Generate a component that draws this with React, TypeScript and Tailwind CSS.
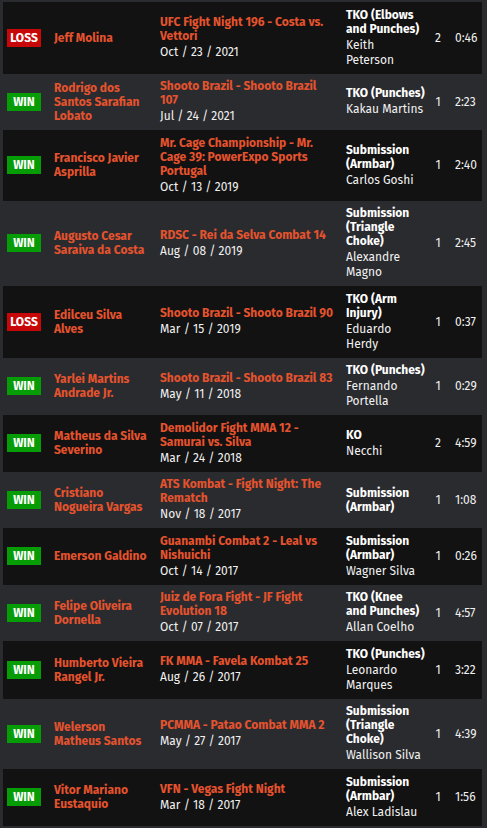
type Fight = {
  result: 'win' | 'loss';
  name: string[];
  event: string[];
  date: string;
  method: string[];
  referee: string[];
  round: number;
  time: string;
};

const fights: Fight[] = [
  { result: 'loss', name: ['Jeff Molina'], event: ['UFC Fight Night 196 - Costa vs.', 'Vettori'], date: 'Oct / 23 / 2021', method: ['TKO (Elbows', 'and Punches)'], referee: ['Keith', 'Peterson'], round: 2, time: '0:46' },
  { result: 'win', name: ['Rodrigo dos', 'Santos Sarafian', 'Lobato'], event: ['Shooto Brazil - Shooto Brazil', '107'], date: 'Jul / 24 / 2021', method: ['TKO (Punches)'], referee: ['Kakau Martins'], round: 1, time: '2:23' },
  { result: 'win', name: ['Francisco Javier', 'Asprilla'], event: ['Mr. Cage Championship - Mr.', 'Cage 39: PowerExpo Sports', 'Portugal'], date: 'Oct / 13 / 2019', method: ['Submission', '(Armbar)'], referee: ['Carlos Goshi'], round: 1, time: '2:40' },
  { result: 'win', name: ['Augusto Cesar', 'Saraiva da Costa'], event: ['RDSC - Rei da Selva Combat 14'], date: 'Aug / 08 / 2019', method: ['Submission', '(Triangle', 'Choke)'], referee: ['Alexandre', 'Magno'], round: 1, time: '2:45' },
  { result: 'loss', name: ['Edilceu Silva', 'Alves'], event: ['Shooto Brazil - Shooto Brazil 90'], date: 'Mar / 15 / 2019', method: ['TKO (Arm', 'Injury)'], referee: ['Eduardo', 'Herdy'], round: 1, time: '0:37' },
  { result: 'win', name: ['Yarlei Martins', 'Andrade Jr.'], event: ['Shooto Brazil - Shooto Brazil 83'], date: 'May / 11 / 2018', method: ['TKO (Punches)'], referee: ['Fernando', 'Portella'], round: 1, time: '0:29' },
  { result: 'win', name: ['Matheus da Silva', 'Severino'], event: ['Demolidor Fight MMA 12 -', 'Samurai vs. Silva'], date: 'Mar / 24 / 2018', method: ['KO'], referee: ['Necchi'], round: 2, time: '4:59' },
  { result: 'win', name: ['Cristiano', 'Nogueira Vargas'], event: ['ATS Kombat - Fight Night: The', 'Rematch'], date: 'Nov / 18 / 2017', method: ['Submission', '(Armbar)'], referee: [], round: 1, time: '1:08' },
  { result: 'win', name: ['Emerson Galdino'], event: ['Guanambi Combat 2 - Leal vs', 'Nishuichi'], date: 'Oct / 14 / 2017', method: ['Submission', '(Armbar)'], referee: ['Wagner Silva'], round: 1, time: '0:26' },
  { result: 'win', name: ['Felipe Oliveira', 'Dornella'], event: ['Juiz de Fora Fight - JF Fight', 'Evolution 18'], date: 'Oct / 07 / 2017', method: ['TKO (Knee', 'and Punches)'], referee: ['Allan Coelho'], round: 1, time: '4:57' },
  { result: 'win', name: ['Humberto Vieira', 'Rangel Jr.'], event: ['FK MMA - Favela Kombat 25'], date: 'Aug / 26 / 2017', method: ['TKO (Punches)'], referee: ['Leonardo', 'Marques'], round: 1, time: '3:22' },
  { result: 'win', name: ['Welerson', 'Matheus Santos'], event: ['PCMMA - Patao Combat MMA 2'], date: 'May / 27 / 2017', method: ['Submission', '(Triangle', 'Choke)'], referee: ['Wallison Silva'], round: 1, time: '4:39' },
  { result: 'win', name: ['Vitor Mariano', 'Eustaquio'], event: ['VFN - Vegas Fight Night'], date: 'Mar / 18 / 2017', method: ['Submission', '(Armbar)'], referee: ['Alex Ladislau'], round: 1, time: '1:56' },
];

const Lines = ({ lines, className }: { lines: string[]; className: string }) => (
  <>
    {lines.map((l, i) => (
      <span key={i} className={`block whitespace-nowrap ${className}`}>
        {l}
      </span>
    ))}
  </>
);

const App = () => {
  return (
    <div
      className="w-[487px] min-h-[828px] bg-[#2a2b2e] pt-[2px] pb-[2px] pl-[3px] pr-[5px] text-[12px] text-[#f1f1f1]"
      style={{ fontFamily: '"Fira Sans", Roboto, "Liberation Sans", sans-serif' }}
    >
      {fights.map((f, i) => (
        <div
          key={i}
          className={`grid grid-cols-[47px_106px_186px_82px_20px_1fr] items-center pl-[4px] py-[5.75px] ${
            i % 2 === 0 ? 'bg-[#121212]' : 'bg-[#2a2b2f]'
          }`}
        >
          {/* Result badge */}
          <div>
            <span
              className={`flex h-[18px] w-[34px] items-center justify-center font-bold leading-none text-white ${
                f.result === 'win' ? 'bg-[#069c06]' : 'bg-[#c80808]'
              }`}
            >
              {f.result === 'win' ? 'WIN' : 'LOSS'}
            </span>
          </div>

          {/* Opponent */}
          <div>
            <Lines lines={f.name} className="font-bold leading-[14px] text-[#e5532e]" />
          </div>

          {/* Event + date */}
          <div>
            <Lines lines={f.event} className="font-bold leading-[14px] text-[#e5532e]" />
            <span className="mt-[2px] block leading-[15px]">{f.date}</span>
          </div>

          {/* Method + referee */}
          <div>
            <Lines lines={f.method} className="font-bold leading-[14px] text-white" />
            {f.referee.length > 0 && (
              <div className="mt-[2px]">
                <Lines lines={f.referee} className="leading-[15px]" />
              </div>
            )}
          </div>

          <div className="text-center">{f.round}</div>
          <div className="pl-[7px]">{f.time}</div>
        </div>
      ))}
    </div>
  );
};

export default App;
